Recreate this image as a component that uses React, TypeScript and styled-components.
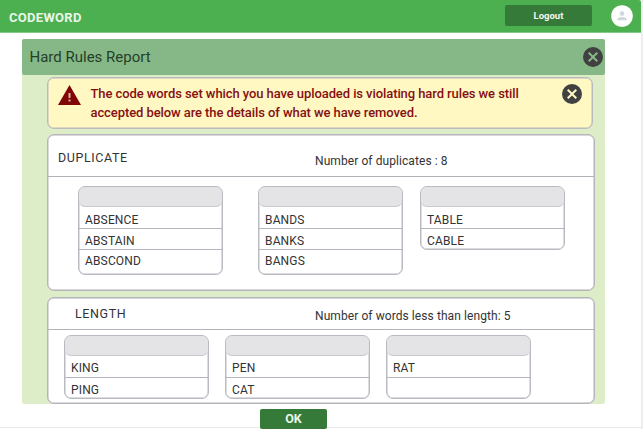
import React from 'react';
import styled, { createGlobalStyle } from 'styled-components';

const GlobalStyle = createGlobalStyle`
  * { box-sizing: border-box; }
  html, body { margin: 0; padding: 0; background: #fff; overflow: hidden; }
  body { font-family: Roboto, "Liberation Sans", sans-serif; color: #333; }
`;

const Page = styled.div`
  width: 643px;
  height: 429px;
  overflow: hidden;
  display: flex;
  flex-direction: column;
  border-right: 2px solid #eeeeee;
`;

const Frame = styled.div`
  height: 428px;
  flex: none;
  display: flex;
  flex-direction: column;
  border-bottom: 1px solid #e9e9e9;
`;

const TopBar = styled.header`
  flex: none;
  height: 33px;
  display: flex;
  align-items: flex-start;
  background: #4caf50;
  border-bottom: 1px solid #85c988;
  padding: 5px 8px 0 9px;
  border-top-right-radius: 2px;
`;

const Brand = styled.h1`
  margin: 5px auto 0 0;
  font-size: 13px;
  line-height: 16px;
  font-weight: 700;
  letter-spacing: 0.3px;
  color: #e9f7e9;
`;

const LogoutButton = styled.button`
  width: 87px;
  height: 21px;
  margin-right: 19px;
  padding: 0;
  border: 0;
  border-radius: 2px;
  background: #357a38;
  color: #f2f8f2;
  font: 700 9.5px/21px Roboto, sans-serif;
`;

const Avatar = styled.svg`
  width: 22px;
  height: 22px;
  display: block;
`;

const Panel = styled.main`
  flex: none;
  width: 583px;
  height: 365px;
  margin: 6px 0 0 22px;
  background: #dcedc8;
  border-radius: 3px;
  display: flex;
  flex-direction: column;
`;

const PanelHeader = styled.div`
  flex: none;
  height: 36px;
  padding: 0 2px 0 7.5px;
  display: flex;
  align-items: center;
  justify-content: space-between;
  background: #86b887;
  border-radius: 2px;
`;

const Title = styled.h2`
  margin: 0;
  font-size: 15px;
  line-height: 20px;
  font-weight: 400;
  color: #253f29;
`;

const CloseIcon = styled.svg`
  width: 20px;
  height: 20px;
  flex: none;
  display: block;
`;

const Alert = styled.section`
  flex: none;
  width: 546px;
  height: 52px;
  margin: 2px 0 0 25px;
  padding: 6px 10px 0;
  display: flex;
  align-items: flex-start;
  background: #fff8c3;
  border: 1px solid #bcbabf;
  border-radius: 7px;
  box-shadow: inset 0 0 0 0.5px #bcbabf;
`;

const WarningIcon = styled.svg`
  width: 23px;
  height: 20px;
  margin-top: 0.5px;
  flex: none;
`;

const AlertText = styled.p`
  flex: 1;
  margin: 0 0 0 9.5px;
  font-size: 13px;
  line-height: 19px;
  font-weight: 500;
  letter-spacing: -0.085px;
  color: #850f12;
  white-space: nowrap;
`;

const Card = styled.section<{ $height: number; $gap: number; $width: number }>`
  flex: none;
  width: ${(p) => p.$width}px;
  height: ${(p) => p.$height}px;
  margin: ${(p) => p.$gap}px 0 0 25px;
  background: #fff;
  border: 1px solid #b5b4bb;
  border-radius: 7px;
  box-shadow: inset 0 0 0 0.5px #b5b4bb;
`;

const CardHeader = styled.div<{ $height: number; $indent: number }>`
  height: ${(p) => p.$height}px;
  padding-left: ${(p) => p.$indent}px;
  display: grid;
  grid-template-columns: ${(p) => 267 - p.$indent}px 1fr;
  border-bottom: 1px solid #b3b2b9;
`;

const CardTitle = styled.h3<{ $top: number }>`
  margin: ${(p) => p.$top}px 0 0;
  font-size: 12.5px;
  line-height: 16px;
  font-weight: 400;
  letter-spacing: 0.6px;
  color: #333;
`;

const Count = styled.p<{ $top: number }>`
  margin: ${(p) => p.$top}px 0 0;
  font-size: 12px;
  line-height: 16px;
  letter-spacing: 0.08px;
  color: #333;
  white-space: nowrap;
`;

const Lists = styled.div<{ $columns: string; $pad: string }>`
  display: grid;
  grid-template-columns: ${(p) => p.$columns};
  align-items: start;
  padding: ${(p) => p.$pad};
`;

const WordList = styled.ul`
  width: 145px;
  margin: 0;
  padding: 0;
  list-style: none;
  border: 1px solid #babac2;
  border-radius: 7px;
  background: #fff;
  box-shadow: inset 0 0 0 0.5px #babac2;
`;

const ListCap = styled.li`
  height: 20px;
  background: #e4e4e6;
  border-bottom: 1px solid #c9c9ce;
  border-radius: 6px;
`;

const Word = styled.li<{ $height: number; $top: number }>`
  height: ${(p) => p.$height}px;
  padding: ${(p) => p.$top}px 0 0 6px;
  font-size: 12px;
  line-height: 15px;
  letter-spacing: 0.15px;
  color: #333;
  &:not(:last-child) { border-bottom: 1px solid #b5b4bc; }
`;

const OkButton = styled.button`
  flex: none;
  width: 67px;
  height: 20px;
  margin: 5px 0 0 260px;
  padding: 0;
  border: 0;
  border-radius: 2px;
  background: #357a38;
  color: #eaf5ea;
  font: 700 12.5px/20px Roboto, sans-serif;
`;

function Close() {
  return (
    <CloseIcon viewBox="0 0 20 20" aria-label="Close">
      <path
        fillRule="evenodd"
        fill="#414141"
        d="M10 0a10 10 0 1 0 0 20a10 10 0 0 0 0-20zM13.6 5L15 6.4L11.4 10L15 13.6L13.6 15L10 11.4L6.4 15L5 13.6L8.6 10L5 6.4L6.4 5L10 8.6z"
      />
    </CloseIcon>
  );
}

// Row metrics: [height, offset of the text from the row's top]
const rowSizes = {
  duplicate: [[22, 6], [21, 5], [24, 4]],
  length: [[22, 5], [20, 5]],
};

function Words({ words, kind }: { words: string[]; kind: 'duplicate' | 'length' }) {
  return (
    <WordList>
      <ListCap />
      {words.map((word, i) => {
        const [height, top] = rowSizes[kind][i];
        return <Word key={i} $height={kind === 'duplicate' && i === 1 && words.length === 2 ? 20 : height} $top={top}>{word}</Word>;
      })}
    </WordList>
  );
}

export default function App() {
  return (
    <Page>
      <GlobalStyle />
      <Frame>
        <TopBar>
          <Brand>CODEWORD</Brand>
          <LogoutButton>Logout</LogoutButton>
          <Avatar viewBox="0 0 22 22">
            <circle cx="11" cy="11" r="10.8" fill="#fff" />
            <circle cx="11" cy="8.6" r="2.3" fill="#cfd8dc" />
            <path d="M6.4 15.3v-1c0-1.6 3-2.4 4.6-2.4s4.6.8 4.6 2.4v1z" fill="#cfd8dc" />
          </Avatar>
        </TopBar>
        <Panel>
          <PanelHeader>
            <Title>Hard Rules Report</Title>
            <Close />
          </PanelHeader>
          <Alert>
            <WarningIcon viewBox="0 0 23 20">
              <path d="M11.5 0L23 20H0z" fill="#800507" />
              <path d="M10.5 8h2v5h-2zM10.5 14.5h2v2h-2z" fill="#d9b39b" />
            </WarningIcon>
            <AlertText>
              The code words set which you have uploaded is violating hard rules we still
              <br />
              accepted below are the details of what we have removed.
            </AlertText>
            <Close />
          </Alert>
          <Card $width={548} $height={157} $gap={5}>
            <CardHeader $height={42} $indent={10}>
              <CardTitle $top={15}>DUPLICATE</CardTitle>
              <Count $top={18}>Number of duplicates : 8</Count>
            </CardHeader>
            <Lists $columns="180px 162px 145px" $pad="9px 0 0 30px">
              <Words kind="duplicate" words={['ABSENCE', 'ABSTAIN', 'ABSCOND']} />
              <Words kind="duplicate" words={['BANDS', 'BANKS', 'BANGS']} />
              <Words kind="duplicate" words={['TABLE', 'CABLE']} />
            </Lists>
          </Card>
          <Card $width={548} $height={107} $gap={6}>
            <CardHeader $height={32} $indent={27}>
              <CardTitle $top={8}>LENGTH</CardTitle>
              <Count $top={10}>Number of words less than length: 5</Count>
            </CardHeader>
            <Lists $columns="161px 161px 145px" $pad="5px 0 0 16px">
              <Words kind="length" words={['KING', 'PING']} />
              <Words kind="length" words={['PEN', 'CAT']} />
              <Words kind="length" words={['RAT', '']} />
            </Lists>
          </Card>
        </Panel>
        <OkButton>OK</OkButton>
      </Frame>
    </Page>
  );
}
